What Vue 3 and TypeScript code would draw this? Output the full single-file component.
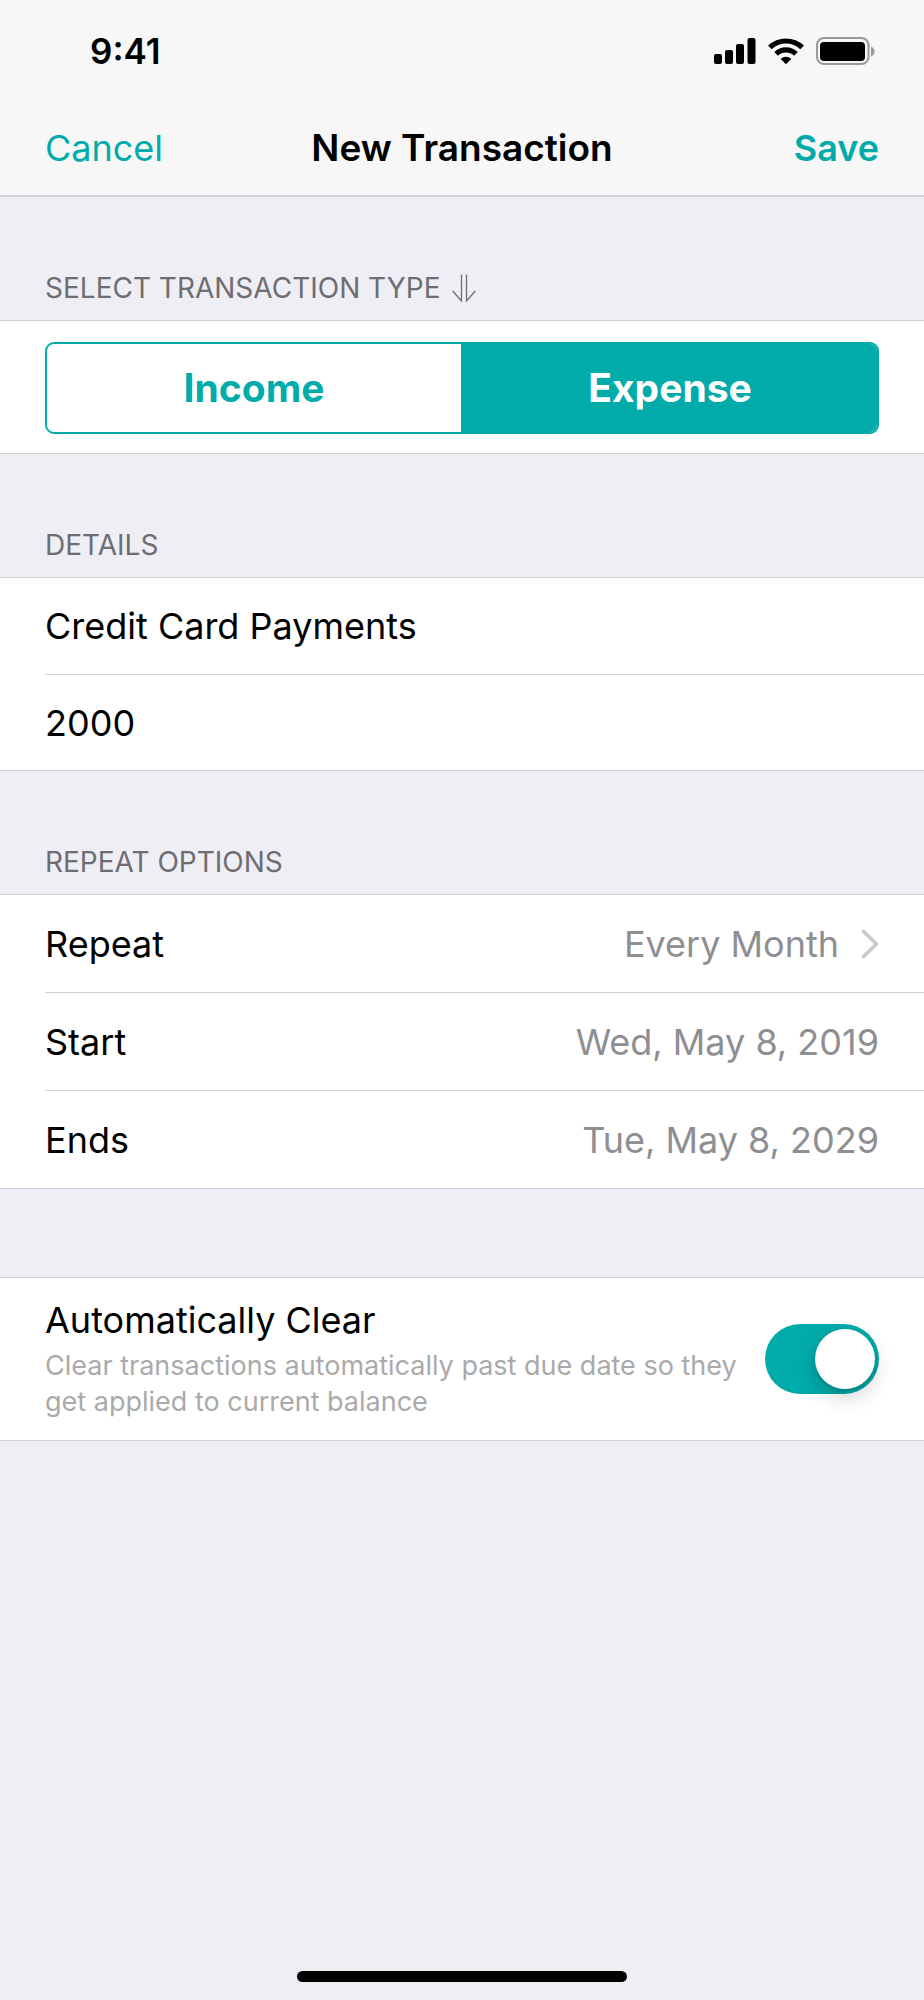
<script setup lang="ts">
import { ref } from 'vue'

interface RepeatOption {
  label: string
  value: string
  disclosure?: boolean
}

const types = ['Income', 'Expense'] as const
const selectedType = ref<(typeof types)[number]>('Expense')
const title = ref('Credit Card Payments')
const amount = ref('2000')
const autoClear = ref(true)

const repeatOptions: RepeatOption[] = [
  { label: 'Repeat', value: 'Every Month', disclosure: true },
  { label: 'Start', value: 'Wed, May 8, 2019' },
  { label: 'Ends', value: 'Tue, May 8, 2029' },
]
</script>

<template>
  <div class="screen">
    <header class="top">
      <div class="status">
        <span class="time">9:41</span>
        <div class="indicators">
          <svg width="42" height="28" viewBox="0 0 42 28" aria-hidden="true">
            <rect x="0" y="17" width="8" height="10" rx="2" />
            <rect x="11" y="13" width="8" height="14" rx="2" />
            <rect x="22" y="7" width="8" height="20" rx="2" />
            <rect x="33.500" y="1" width="8" height="26" rx="2" />
          </svg>
          <svg width="36" height="28" viewBox="0 0 36 28" aria-hidden="true">
            <g fill="none" stroke="#000" stroke-width="5.200">
              <path d="M1.900 10.400A23.400 23.400 0 0 1 34.100 10.400" />
              <path d="M8.100 16.800A14.200 14.200 0 0 1 27.900 16.800" />
            </g>
            <path d="M18 27.200 12.700 21.900A7.500 7.500 0 0 1 23.300 21.900Z" />
          </svg>
          <svg width="60" height="28" viewBox="0 0 60 28" aria-hidden="true">
            <rect x="1" y="1" width="51.500" height="26" rx="7" fill="none" stroke="#9a9a9a" stroke-width="2" />
            <rect x="4" y="5" width="45" height="19" rx="4" />
            <path d="M55 9.500C57 10.500 58.500 12 58.500 14.500S57 18.500 55 19.500Z" fill="#9a9a9a" />
          </svg>
        </div>
      </div>
      <nav class="nav">
        <button type="button" class="action">Cancel</button>
        <h1>New Transaction</h1>
        <button type="button" class="action save">Save</button>
      </nav>
    </header>

    <main>
      <h2 id="type-title">
        SELECT TRANSACTION TYPE
        <svg width="24" height="28" viewBox="0 0 24 28" aria-hidden="true">
          <path d="M9.500 .500V27L.700 17M14.500 .500V27L23.300 17" fill="none" stroke="#6d6d72" stroke-width="1.300" />
        </svg>
      </h2>
      <section class="group type-group">
        <div class="segments" role="radiogroup" aria-labelledby="type-title">
          <label v-for="type in types" :key="type" class="segment" :class="{ selected: selectedType === type }">
            <input v-model="selectedType" type="radio" name="type" :value="type" />
            <span>{{ type }}</span>
          </label>
        </div>
      </section>

      <h2>DETAILS</h2>
      <section class="group details">
        <input v-model="title" class="field" type="text" aria-label="Title" />
        <input v-model="amount" class="field" type="text" inputmode="decimal" aria-label="Amount" />
      </section>

      <h2>REPEAT OPTIONS</h2>
      <section class="group">
        <button v-for="option in repeatOptions" :key="option.label" type="button" class="row">
          <span>{{ option.label }}</span>
          <span class="value">
            {{ option.value }}
            <svg v-if="option.disclosure" width="18" height="30" viewBox="0 0 18 30" aria-hidden="true">
              <path d="M1.500 1.500 15.500 15 1.500 28.500" fill="none" stroke="#c7c7cc" stroke-width="3.400" />
            </svg>
          </span>
        </button>
      </section>

      <section class="group clear-group">
        <div class="clear-text">
          <label for="auto-clear">Automatically Clear</label>
          <p id="auto-clear-note">Clear transactions automatically past due date so they get applied to current balance</p>
        </div>
        <input
          id="auto-clear"
          v-model="autoClear"
          class="switch"
          type="checkbox"
          role="switch"
          aria-describedby="auto-clear-note"
        />
      </section>
    </main>

    <div class="home-indicator"></div>
  </div>
</template>

<style>
body {
  margin: 0;
  background: #efeef4;
}
</style>

<style scoped>
.screen {
  --teal: #00abaa;
  --line: #d1d0d6;
  --edge: 45px;
  display: flex;
  flex-direction: column;
  min-height: 100vh;
  background: #efeef4;
  color: #000;
  font-family: Inter, "Liberation Sans", sans-serif;
  font-size: 36px;
  line-height: 44px;
}

.screen * {
  box-sizing: border-box;
}

button,
input {
  margin: 0;
  padding: 0;
  border: 0;
  background: none;
  color: inherit;
  font: inherit;
}

.top {
  background: #f7f7f7;
  border-bottom: 2px solid #d3d3d5;
}

.status {
  display: flex;
  align-items: center;
  justify-content: space-between;
  height: 101px;
  padding: 0 48px 0 90px;
}

.time {
  font-size: 35px;
  font-weight: 600;
}

.indicators {
  display: flex;
  gap: 12px;
}

.nav {
  display: grid;
  grid-template-columns: 1fr auto 1fr;
  align-items: center;
  height: 94px;
  padding: 0 var(--edge);
}

.action {
  justify-self: start;
  color: var(--teal);
}

.save {
  justify-self: end;
  font-weight: 600;
}

h1 {
  margin: 0;
  font-size: 37px;
  font-weight: 600;
}

h2 {
  display: flex;
  align-items: center;
  gap: 12px;
  margin: 0;
  padding: 73px var(--edge) 14px;
  color: #6d6d72;
  font-size: 28px;
  font-weight: 400;
  line-height: 36px;
}

.group {
  background: #fff;
  border-top: 1px solid var(--line);
  border-bottom: 1px solid var(--line);
}

.type-group {
  padding: 21px var(--edge) 19px;
}

.segments {
  display: flex;
  overflow: hidden;
  height: 92px;
  border: 2px solid var(--teal);
  border-radius: 9px;
}

.segment {
  display: flex;
  flex: 1;
  align-items: center;
  justify-content: center;
  color: var(--teal);
  font-size: 39px;
  font-weight: 700;
}

.segment + .segment {
  border-left: 2px solid var(--teal);
}

.segment input {
  appearance: none;
}

.segment.selected {
  background: var(--teal);
  color: #fff;
}

.details {
  display: flex;
  flex-direction: column;
  padding-left: var(--edge);
}

.field {
  height: 96px;
  outline: none;
}

.field + .field {
  border-top: 1px solid var(--line);
}

.row {
  display: flex;
  align-items: center;
  justify-content: space-between;
  width: calc(100% - var(--edge));
  height: 97px;
  margin-left: var(--edge);
  padding-right: var(--edge);
}

.row + .row {
  height: 98px;
  border-top: 1px solid var(--line);
}

.value {
  display: flex;
  align-items: center;
  gap: 22px;
  color: #8e8e93;
}

.clear-group {
  display: flex;
  align-items: center;
  justify-content: space-between;
  gap: 16px;
  margin-top: 88px;
  padding: 20px var(--edge);
}

.clear-text label {
  display: block;
}

.clear-text p {
  margin: 6px 0 0;
  color: #aaa;
  font-size: 27px;
  line-height: 36px;
}

.switch {
  display: flex;
  flex: none;
  align-items: center;
  width: 114px;
  height: 70px;
  padding: 0 4px;
  border-radius: 35px;
  background: #d8d8dc;
  appearance: none;
}

.switch::before {
  content: "";
  width: 60px;
  height: 60px;
  border-radius: 50%;
  background: #fff;
  box-shadow: 0 8px 20px rgb(0 0 0 / 18%), 0 2px 4px rgb(0 0 0 / 14%);
}

.switch:checked {
  justify-content: flex-end;
  background: var(--teal);
}

.home-indicator {
  width: 330px;
  height: 11px;
  margin: auto auto 18px;
  border-radius: 6px;
  background: #000;
}
</style>
